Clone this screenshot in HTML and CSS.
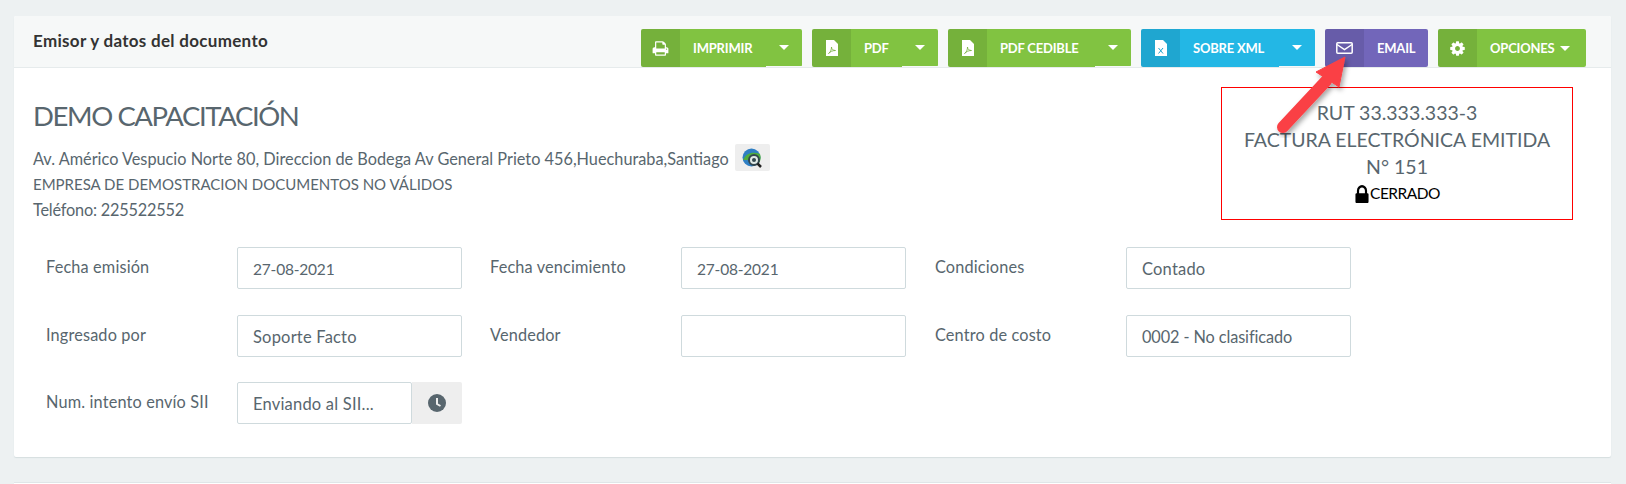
FILE: index.html
```html
<!DOCTYPE html>
<html lang="es">
<head>
    <meta charset="UTF-8">
    <title>Emisor y datos del documento</title>
    <link rel="stylesheet" href="styles.css">
</head>
<body>
    <div class="panel">
        <div class="panel-heading">
            <div class="panel-title">Emisor y datos del documento</div>
            <div class="toolbar">
                <div class="btn btn-green btn-imprimir">
                    <span class="btn-icon"><svg width="17" height="17" viewBox="0 0 1792 1792"><path fill="#fff" d="M448 1536h896v-256h-896v256zm0-640h896v-384h-160q-40 0-68-28t-28-68v-160h-640v640zm1152 64q0-26-19-45t-45-19-45 19-19 45 19 45 45 19 45-19 19-45zm128 0v416q0 13-9.5 22.5t-22.5 9.5h-224v160q0 40-28 68t-68 28h-960q-40 0-68-28t-28-68v-160h-224q-13 0-22.5-9.5t-9.5-22.5v-416q0-79 56.5-135.5t135.5-56.5h64v-544q0-40 28-68t68-28h672q40 0 88 20t76 48l152 152q28 28 48 76t20 88v256h64q79 0 135.5 56.5t56.5 135.5z"/></svg></span>
                    <span class="btn-label">IMPRIMIR</span>
                    <span class="btn-split"><i class="caret"></i></span>
                </div>
                <div class="btn btn-green btn-pdf">
                    <span class="btn-icon"><svg width="12" height="16" viewBox="0 0 12 16"><path fill="#fff" d="M0 0h8l4 4v12H0z"/><path fill="none" stroke="#76ad3c" stroke-width=".8" d="M2.5 13.5c2-1 3-4 3-6.5 0 2 1.5 3.5 4 3.5-3 0-5 1-7 3z"/></svg></span>
                    <span class="btn-label">PDF</span>
                    <span class="btn-split"><i class="caret"></i></span>
                </div>
                <div class="btn btn-green btn-cedible">
                    <span class="btn-icon"><svg width="12" height="16" viewBox="0 0 12 16"><path fill="#fff" d="M0 0h8l4 4v12H0z"/><path fill="none" stroke="#76ad3c" stroke-width=".8" d="M2.5 13.5c2-1 3-4 3-6.5 0 2 1.5 3.5 4 3.5-3 0-5 1-7 3z"/></svg></span>
                    <span class="btn-label">PDF CEDIBLE</span>
                    <span class="btn-split"><i class="caret"></i></span>
                </div>
                <div class="btn btn-blue btn-xml">
                    <span class="btn-icon"><svg width="12" height="16" viewBox="0 0 12 16"><path fill="#fff" d="M0 0h8l4 4v12H0z"/><path fill="none" stroke="#1fa3cd" stroke-width="1" d="M3.5 8l4.5 5.5M8 8l-4.5 5.5"/></svg></span>
                    <span class="btn-label">SOBRE XML</span>
                    <span class="btn-split"><i class="caret"></i></span>
                </div>
                <div class="btn btn-purple btn-email">
                    <span class="btn-icon"><svg width="17" height="12" viewBox="0 0 17 12"><rect x=".8" y=".8" width="15.4" height="10.4" rx="1" fill="none" stroke="#fff" stroke-width="1.5"/><path d="M1 2.5l7.5 5 7.5-5" fill="none" stroke="#fff" stroke-width="1.5"/></svg></span>
                    <span class="btn-label">EMAIL</span>
                </div>
                <div class="btn btn-green btn-opciones">
                    <span class="btn-icon"><svg width="17" height="17" viewBox="0 0 1792 1792"><path fill="#fff" d="M1152 896q0-106-75-181t-181-75-181 75-75 181 75 181 181 75 181-75 75-181zm512-109v222q0 12-8 23t-20 13l-185 28q-19 54-39 91 35 50 107 138 10 12 10 25t-9 23q-27 37-99 108t-94 71q-12 0-26-9l-138-108q-44 23-91 38-16 136-29 186-7 28-36 28h-222q-14 0-24.5-8.5t-11.5-21.5l-28-184q-49-16-90-37l-141 107q-10 9-25 9-14 0-25-11-126-114-165-168-7-10-7-23 0-12 8-23 15-21 51-66.5t54-70.5q-27-50-41-99l-183-27q-13-2-21-12.5t-8-23.5v-222q0-12 8-23t19-13l186-28q14-46 39-92-40-57-107-138-10-12-10-24 0-10 9-23 26-36 98.5-107.5t94.5-71.5q13 0 26 10l138 107q44-23 91-38 16-136 29-186 7-28 36-28h222q14 0 24.5 8.5t11.5 21.5l28 184q49 16 90 37l142-107q9-9 24-9 13 0 25 10 129 119 165 170 7 8 7 22 0 12-8 23-15 21-51 66.5t-54 70.5q26 50 41 98l183 28q13 2 21 12.5t8 23.5z"/></svg></span>
                    <span class="btn-label">OPCIONES<i class="caret caret-inline"></i></span>
                </div>
            </div>
        </div>

        <div class="panel-body">
            <div class="doc-head">
                <div class="company">
                    <h2 class="company-name">DEMO CAPACITACIÓN</h2>
                    <div class="company-line">Av. Américo Vespucio Norte 80, Direccion de Bodega Av General Prieto 456,Huechuraba,Santiago
                        <span class="map-btn"><svg width="20" height="20" viewBox="0 0 20 20"><circle cx="9.5" cy="9.5" r="9" fill="#2f7fc4"/><path d="M1 12c3-7 10-9 17-6 1 3 1 6-1 9-5-3-11-3-16-3z" fill="#4fae3e"/><circle cx="12" cy="12" r="5" fill="#dfe9e6" stroke="#33474f" stroke-width="2"/><circle cx="12" cy="12" r="2" fill="#33474f"/><path d="M15.5 15.5l3.5 3.5" stroke="#222" stroke-width="2.5"/></svg></span>
                    </div>
                    <div class="company-line company-caps">EMPRESA DE DEMOSTRACION DOCUMENTOS NO VÁLIDOS</div>
                    <div class="company-line company-phone">Teléfono: 225522552</div>
                </div>
                <div class="doc-box">
                    <div>RUT 33.333.333-3</div>
                    <div>FACTURA ELECTRÓNICA EMITIDA</div>
                    <div>N° 151</div>
                    <div class="doc-status"><svg width="16" height="18" viewBox="192 128 1408 1408" preserveAspectRatio="none"><path fill="#000" d="M640 768h512v-192q0-106-75-181t-181-75-181 75-75 181v192zm832 96v576q0 40-28 68t-68 28h-960q-40 0-68-28t-28-68v-576q0-40 28-68t68-28h32v-192q0-184 132-316t316-132 316 132 132 316v192h32q40 0 68 28t28 68z"/></svg>CERRADO</div>
                </div>
            </div>

            <div class="form-grid">
                <label>Fecha emisión</label>
                <div class="input input-num">27-08-2021</div>
                <label class="label-second">Fecha vencimiento</label>
                <div class="input input-num">27-08-2021</div>
                <label class="label-third">Condiciones</label>
                <div class="input">Contado</div>

                <label>Ingresado por</label>
                <div class="input">Soporte Facto</div>
                <label class="label-second">Vendedor</label>
                <div class="input"></div>
                <label class="label-third">Centro de costo</label>
                <div class="input input-code">0002 - No clasificado</div>

                <label>Num. intento envío SII</label>
                <div class="input-group">
                    <div class="input">Enviando al SII...</div>
                    <span class="addon"><svg width="18" height="18" viewBox="0 0 18 18"><circle cx="9" cy="9" r="9" fill="#58666e"/><path d="M9 4v6l3.5 2" fill="none" stroke="#eee" stroke-width="2"/></svg></span>
                </div>
            </div>
        </div>

        <!-- flecha roja sobre el boton email -->
        <svg class="arrow" width="90" height="90" viewBox="0 0 90 90">
            <defs><filter id="sombra" x="-20%" y="-20%" width="150%" height="150%"><feDropShadow dx="2" dy="3" stdDeviation="2.5" flood-color="#000" flood-opacity=".35"/></filter></defs>
            <g filter="url(#sombra)">
                <path d="M15 79L58 33" stroke="#fa4145" stroke-width="12" stroke-linecap="round"/>
                <path d="M77 9L48 24L71 39z" fill="#fa4145" stroke="#fa4145" stroke-width="1" stroke-linejoin="round"/>
            </g>
        </svg>
    </div>
    <div class="panel-next"></div>
</body>
</html>
```

FILE: styles.css
```css
body {
    font-family: "Lato", "Noto Sans", sans-serif;
    margin: 0;
    padding: 16px 15px 0 14px;
    background-color: #edf1f2;
    color: #58666e;
    height: 468px;
    overflow: hidden;
}

.panel {
    position: relative;
    height: 441px;
    background-color: #fff;
    border-radius: 2px;
    box-shadow: 0 1px 1px #d5dedf;
}

.panel-heading {
    display: flex;
    justify-content: space-between;
    height: 52px;
    padding: 13px 25px 0 19px;
    box-sizing: border-box;
    background-color: #f6f8f8;
    border-bottom: 1px solid #e6ebec;
    border-radius: 2px 2px 0 0;
}

.panel-title {
    font-size: 17px;
    font-weight: 700;
    color: #333;
    letter-spacing: 0.3px;
    line-height: 24px;
}

.toolbar {
    display: flex;
    gap: 10px;
    height: 38px;
}

.btn {
    display: flex;
    align-items: flex-start;
    height: 38px;
    color: #fff;
    font-size: 13px;
    font-weight: 700;
    letter-spacing: -0.2px;
    border-radius: 2px;
}

.btn-green { background-color: #81c341; }
.btn-blue { background-color: #23b7e5; }
.btn-purple { background-color: #7266ba; }

.btn-icon {
    width: 39px;
    height: 38px;
    display: flex;
    align-items: center;
    justify-content: center;
    background-color: rgba(0, 0, 0, 0.09);
    border-radius: 2px 0 0 2px;
    flex-shrink: 0;
}

.btn-label {
    height: 38px;
    line-height: 38px;
    padding-left: 13px;
    white-space: nowrap;
}

.btn-split {
    height: 37px;
    display: flex;
    align-items: center;
    justify-content: center;
    width: 36px;
    margin-left: auto;
}

/* el borde blanco de abajo del split */
.btn-imprimir { width: 161px; background: linear-gradient(#81c341, #81c341) top/100% 37px no-repeat, linear-gradient(90deg, #81c341 125px, #f6f8f8 125px); }
.btn-pdf { width: 126px; background: linear-gradient(#81c341, #81c341) top/100% 37px no-repeat, linear-gradient(90deg, #81c341 90px, #f6f8f8 90px); }
.btn-cedible { width: 183px; background: linear-gradient(#81c341, #81c341) top/100% 37px no-repeat, linear-gradient(90deg, #81c341 147px, #f6f8f8 147px); }
.btn-xml { width: 174px; background: linear-gradient(#23b7e5, #23b7e5) top/100% 37px no-repeat, linear-gradient(90deg, #23b7e5 138px, #f6f8f8 138px); }
.btn-email { width: 103px; }
.btn-opciones { width: 148px; }

.caret {
    display: block;
    width: 0;
    height: 0;
    border-left: 5px solid transparent;
    border-right: 5px solid transparent;
    border-top: 5px solid #fff;
}

.caret-inline {
    display: inline-block;
    vertical-align: 2px;
    margin-left: 5px;
}

.panel-body {
    padding: 19px 19px 0;
}

.doc-head {
    display: flex;
    justify-content: space-between;
    height: 160px;
    padding-right: 19px;
}

.company-name {
    margin: 11px 0 11.5px;
    font-size: 27.5px;
    font-weight: 400;
    line-height: 36px;
    letter-spacing: -1.4px;
}

.company-line {
    display: flex;
    align-items: center;
    gap: 6px;
    height: 25.5px;
    font-size: 16.3px;
}

.company-caps {
    font-size: 15px;
}

.company-phone {
    letter-spacing: -0.2px;
}

.map-btn {
    display: flex;
    width: 35px;
    height: 27px;
    align-items: center;
    justify-content: center;
    background-color: #eee;
    border-radius: 2px;
    margin-top: -1px;
}

.doc-box {
    width: 352px;
    height: 133px;
    box-sizing: border-box;
    padding-top: 11px;
    border: 1px solid #f00;
    text-align: center;
    font-size: 19.5px;
    line-height: 27px;
}

.doc-status {
    display: flex;
    align-items: center;
    justify-content: center;
    font-size: 15.5px;
    color: #000;
    letter-spacing: -0.5px;
}

.form-grid {
    display: grid;
    grid-template-columns: 191px 225px 219px 225px 220px 225px;
    grid-auto-rows: 42px;
    row-gap: 25.5px;
    padding-left: 13px;
    font-size: 16.3px;
}

.form-grid label {
    line-height: 40px;
    letter-spacing: 0.15px;
}

.form-grid .label-second { margin-left: 28px; }
.form-grid .label-third { margin-left: 29px; }

.input {
    height: 42px;
    box-sizing: border-box;
    padding: 0 15px;
    line-height: 42px;
    border: 1px solid #cfdadd;
    border-radius: 2px;
    font-size: 16.5px;
    letter-spacing: 0.2px;
}

.input-num {
    font-size: 15.5px;
    letter-spacing: -0.2px;
}

.input-code {
    font-size: 16.3px;
    letter-spacing: -0.1px;
}

.input-group {
    display: flex;
}

.input-group .input {
    width: 175px;
    flex-shrink: 0;
}

.addon {
    flex: 1;
    display: flex;
    align-items: center;
    justify-content: center;
    background-color: #eee;
    border-radius: 0 2px 2px 0;
}

.arrow {
    position: absolute;
    left: 1254px;
    top: 32px;
}

.panel-next {
    height: 20px;
    margin-top: 25px;
    background-color: #fff;
    border-top: 1px solid #e0e6e8;
}
```
